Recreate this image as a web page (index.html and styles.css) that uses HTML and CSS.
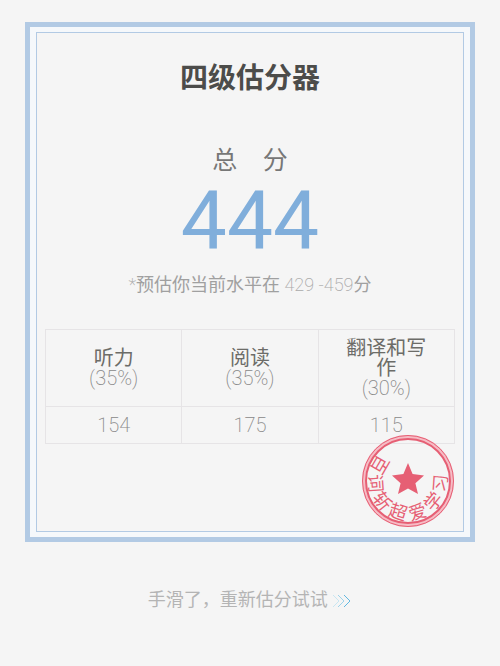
FILE: index.html
```html
<!DOCTYPE html>
<html lang="zh-CN">
<head>
    <meta charset="UTF-8">
    <title>四级估分器</title>
    <meta name="viewport" content="width=device-width, initial-scale=1.0">
    <link rel="stylesheet" href="styles.css">
</head>
<body>

<main class="card">
    <div class="card-inner">
        <h1>四级估分器</h1>

        <h2>总&emsp;分</h2>
        <p class="total">444</p>
        <p class="estimate">*<span>预估你当前水平在</span> 429 -459<span>分</span></p>

        <table class="scores">
            <thead>
                <tr>
                    <th scope="col">听力<small>(35%)</small></th>
                    <th scope="col">阅读<small>(35%)</small></th>
                    <th scope="col">翻译和写作<small>(30%)</small></th>
                </tr>
            </thead>
            <tbody>
                <tr>
                    <td>154</td>
                    <td>175</td>
                    <td>115</td>
                </tr>
            </tbody>
        </table>

        <svg class="stamp" viewBox="-47 -47 94 94" role="img" aria-label="百词斩超爱学习">
            <circle class="ring-edge" r="44" />
            <circle class="ring" r="42" />
            <circle class="ring-outline" r="45.5" />
            <path class="star" d="M0 -18 L4.6 -7 L16 -5.5 L7.4 2.2 L10 13 L0 7.5 L-10 13 L-7.4 2.2 L-16 -5.5 L-4.6 -7 Z" />
            <g class="stamp-text">
                <text y="39" transform="rotate(120)">百</text>
                <text y="39" transform="rotate(86)">词</text>
                <text y="39" transform="rotate(52)">斩</text>
                <text y="39" transform="rotate(18)">超</text>
                <text y="39" transform="rotate(-17)">爱</text>
                <text y="39" transform="rotate(-51)">学</text>
                <text y="39" transform="rotate(-86)">习</text>
            </g>
        </svg>
    </div>
</main>

<footer>
    <a class="retry" href="#">手滑了，重新估分试试
        <svg class="arrows" viewBox="0 0 20 14" aria-hidden="true">
            <path class="a1" d="M1 1 L7 7 L1 13" />
            <path class="a2" d="M6 1 L12 7 L6 13" />
            <path class="a3" d="M12 1 L18 7 L12 13" />
        </svg>
    </a>
</footer>

</body>
</html>
```

FILE: styles.css
```css
* { box-sizing: border-box; }
:root {
    --bg-color: #f5f5f5;
    --frame-color: #b2cae4;
    --line-color: #e6e4e6;
    --stamp-color: #e65f74;
}
body {
    margin: 0;
    padding: 22px 25px;
    background-color: var(--bg-color);
    color: #888;
    font-family: Roboto, "Noto Sans CJK SC", sans-serif;
    font-weight: 200;
    text-align: center;
}
h1, h2, p { margin: 0; }

.card {
    border: 5px solid var(--frame-color);
    padding: 5px 6px;
    background-color: #f5f8fb;
}
.card-inner {
    position: relative;
    border: 1px solid var(--frame-color);
    padding: 26px 8px 87px;
    background-color: var(--bg-color);
}

h1 {
    color: #4c4c4a;
    font-size: 28px;
    line-height: 40px;
    font-weight: bold;
}
h2 {
    margin-top: 44px;
    color: #777;
    font-size: 25px;
    line-height: 36px;
    font-weight: 400;
}
.total {
    color: #80aedb;
    font-size: 82px;
    line-height: 84px;
    font-weight: 400;
}
.estimate {
    margin-top: 8px;
    color: #aaa;
    font-size: 18px;
    line-height: 28px;
}
.estimate span {
    color: #a0a0a0;
    font-weight: 400;
}

.scores {
    width: 100%;
    margin-top: 30px;
    table-layout: fixed;
    border-collapse: collapse;
}
.scores th, .scores td {
    border: 1px solid var(--line-color);
    font-size: 20px;
    line-height: 20px;
}
.scores th {
    height: 77px;
    padding: 7px 24px;
    color: #6c6c68;
    font-weight: 400;
}
.scores small {
    display: block;
    color: #888;
    font-size: 20px;
    font-weight: 200;
}
.scores td { padding: 8px 0; }

.stamp {
    position: absolute;
    right: 8px;
    bottom: 3px;
    width: 94px;
    height: 94px;
}
.ring, .ring-edge, .ring-outline {
    fill: none;
    stroke: var(--stamp-color);
    stroke-width: 2;
}
.ring-edge {
    stroke: #f6bcc5;
    stroke-width: 4;
}
.ring-outline { stroke-width: 1; }
.star { fill: var(--stamp-color); }
.stamp-text {
    fill: var(--stamp-color);
    font-size: 18px;
    font-weight: 400;
    text-anchor: middle;
}

footer { margin-top: 44px; }
.retry {
    color: #b4b4b4;
    font-size: 18px;
    line-height: 28px;
    font-weight: 400;
    text-decoration: none;
}
.arrows {
    width: 20px;
    height: 14px;
    vertical-align: -2px;
    fill: none;
    stroke-width: 1;
}
.a1 { stroke: #c8e6f2; }
.a2 { stroke: #9dd3ea; }
.a3 { stroke: #62b8e0; }
```
